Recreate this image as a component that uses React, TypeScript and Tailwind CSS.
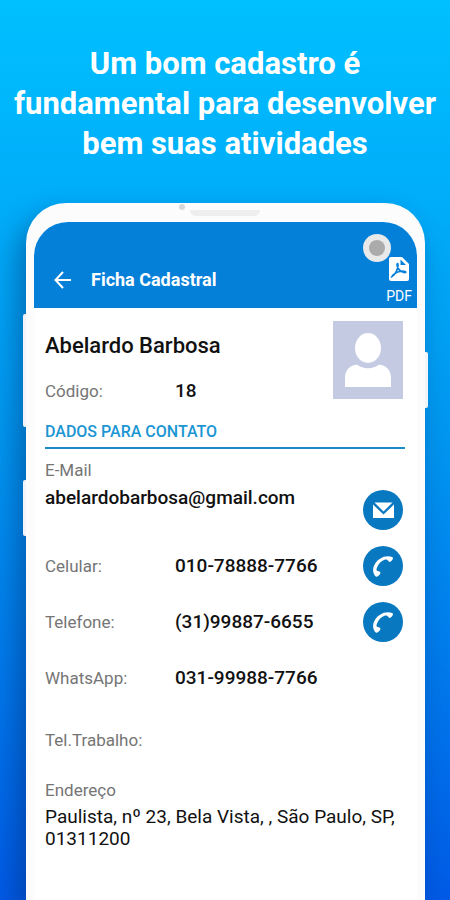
import React from "react";

const pageBackground = "bg-linear-to-b from-[#00c0ff] via-[#0095f0] via-50% to-[#005ae6]";

function PhoneGlyph() {
  return (
    <svg viewBox="0 0 40 40" className="size-10" aria-hidden="true">
      <path
        d="M12.800 30.500C9.300 27.500 9.400 22 12 17.800C14.800 13.200 20 10 25 10.200C27.500 10.300 29.800 10.900 30 11.800C30.200 13 28.500 15.800 26.800 15.900C25.200 15.900 25 13.700 23.500 13.600C20.500 13.500 17 16.300 15.300 19.100C13.700 21.800 13 24 13.900 24.800C14.800 25.500 17.200 25 17.400 26.600C17.600 28.200 14.500 31.600 12.800 30.500Z"
        fill="#fff"
      />
    </svg>
  );
}

function MailGlyph() {
  return (
    <svg viewBox="0 0 40 40" className="size-10" aria-hidden="true">
      <path d="M11.500 12.500H29.500L20.500 21.500Z" fill="#fff" />
      <path d="M10 14.500L20.500 24.500L31 14.500V28H10Z" fill="#fff" />
    </svg>
  );
}

function ActionLink({ href, label, children }: { href: string; label: string; children: React.ReactNode }) {
  return (
    <a
      href={href}
      aria-label={label}
      className="mr-0.5 flex size-10 shrink-0 items-center justify-center rounded-full bg-[#0878c0]"
    >
      {children}
    </a>
  );
}

function ContactRow({ label, value, children }: { label: string; value?: string; children?: React.ReactNode }) {
  return (
    <div className="flex h-10 items-center">
      <dt className="w-[130px] shrink-0 text-[17px] leading-5 text-[#757575]">{label}</dt>
      <dd className="flex flex-1 items-center justify-between text-[19px] leading-6 font-medium">
        <span>{value}</span>
        {children}
      </dd>
    </div>
  );
}

function AppHeader() {
  return (
    <header className="flex h-[86px] items-end justify-between rounded-t-[34px] bg-[#0580d9] pr-[5px] pl-[18px] text-white">
      <div className="flex items-center gap-[17px] pb-4">
        <button type="button" aria-label="Voltar" className="size-[22px]">
          <svg viewBox="0 0 22 22" className="size-[22px]" fill="none" stroke="#fff" strokeWidth="2" aria-hidden="true">
            <path d="M19 11H4M11 3L3.500 11L11 19" />
          </svg>
        </button>
        <h2 className="text-lg leading-6 font-bold">Ficha Cadastral</h2>
      </div>
      <button type="button" className="relative flex flex-col items-center pb-1 text-sm leading-4">
        <svg viewBox="0 0 20 24" className="mb-[7px] h-6 w-5" aria-hidden="true">
          <path d="M2 0H13L20 7V22Q20 24 18 24H2Q0 24 0 22V2Q0 0 2 0Z" fill="#fff" />
          <path d="M11.500 2.500V8H17Z" fill="#0580d9" />
          <path
            d="M3 19.500C6 18 9 12.500 9 8C9 5.500 7.500 6.500 8.200 9C9.200 13 13 16 16.500 15.500C18 14.500 13 13.500 9.500 14.800C7 15.600 3.500 18 3 19.500Z"
            fill="none"
            stroke="#0580d9"
            strokeWidth="1.700"
          />
        </svg>
        PDF
        <span className="absolute -top-[23px] -left-[23px] flex size-7 items-center justify-center rounded-full bg-[#e9e9e9]">
          <span className="size-4 rounded-full bg-[#ababab]" />
        </span>
      </button>
    </header>
  );
}

function Avatar() {
  return (
    <svg viewBox="0 0 70 78" className="mr-0.5 h-[78px] w-[70px]" role="img" aria-label="Foto">
      <rect width="70" height="78" fill="#c3cae2" />
      <ellipse cx="35" cy="27" rx="13" ry="15" fill="#fff" />
      <path d="M12 66V57C12 49 17 44 24 43.500C30 48.500 40 48.500 46 43.500C53 44 58 49 58 57V66Z" fill="#fff" />
    </svg>
  );
}

export default function App() {
  return (
    <main className={`flex min-h-screen flex-col overflow-hidden font-[Roboto,sans-serif] ${pageBackground}`}>
      <h1 className="px-3 pt-11 text-center text-[31px] leading-10 font-bold text-white">
        Um bom cadastro é<br />
        fundamental para desenvolver
        <br />
        bem suas atividades
      </h1>

      <div className="relative mt-[39px] mr-[25px] ml-[26px] flex flex-1 flex-col rounded-t-[40px] bg-[#fcfcfc] px-2 pt-[19px] shadow-[-8px_14px_28px_rgba(0,30,90,0.42)]">
        <span className="absolute top-[111px] -left-[3px] h-[113px] w-[3px] rounded-l-xs bg-[#f3f4f8]" />
        <span className="absolute top-[277px] -left-[3px] h-14 w-[3px] rounded-l-xs bg-[#f3f4f8]" />
        <span className="absolute top-[149px] -right-[3px] h-14 w-[3px] rounded-r-xs bg-[#f3f4f8]" />
        <span className="absolute top-px left-[153px] size-1.5 rounded-full bg-[#d8d8da]" />
        <span className="absolute top-[7px] left-[164px] h-1.5 w-[70px] rounded-b-md bg-[#eeeeef]" />

        <AppHeader />

        <section className="flex-1 bg-white pt-[13px] pr-3 pb-[50px] pl-[11px] text-[#111]">
          <div className="flex h-20 justify-between">
            <div className="flex flex-col justify-between pt-[13px]">
              <h3 className="text-[22px] leading-6 font-medium">Abelardo Barbosa</h3>
              <dl className="flex items-center">
                <dt className="w-[130px] text-[17px] leading-5 text-[#757575]">Código:</dt>
                <dd className="text-[19px] leading-5 font-medium">18</dd>
              </dl>
            </div>
            <Avatar />
          </div>

          <h4 className="mt-[21px] border-b-2 border-[#1b8ac6] pb-[5px] text-base leading-5 font-medium text-[#1b96d3]">
            DADOS PARA CONTATO
          </h4>

          <dl>
            <div className="mt-[11px] flex h-[70px] items-end justify-between">
              <div className="flex h-full flex-col gap-1.5">
                <dt className="text-[17px] leading-5 text-[#757575]">E-Mail</dt>
                <dd className="text-[19px] leading-6 font-medium">abelardobarbosa@gmail.com</dd>
              </div>
              <ActionLink href="mailto:abelardobarbosa@gmail.com" label="Enviar e-mail">
                <MailGlyph />
              </ActionLink>
            </div>
            <div className="mt-4 flex flex-col gap-4">
              <ContactRow label="Celular:" value="010-78888-7766">
                <ActionLink href="tel:010788887766" label="Ligar para o celular">
                  <PhoneGlyph />
                </ActionLink>
              </ContactRow>
              <ContactRow label="Telefone:" value="(31)99887-6655">
                <ActionLink href="tel:31998876655" label="Ligar para o telefone">
                  <PhoneGlyph />
                </ActionLink>
              </ContactRow>
              <ContactRow label="WhatsApp:" value="031-99988-7766" />
            </div>
            <div className="mt-[22px]">
              <ContactRow label="Tel.Trabalho:" />
            </div>
            <div className="mt-5">
              <dt className="text-[17px] leading-5 text-[#757575]">Endereço</dt>
              <dd className="mt-1.5 text-[19px] leading-[22px]">
                Paulista, nº 23, Bela Vista, , São Paulo, SP, 01311200
              </dd>
            </div>
          </dl>
        </section>
      </div>
    </main>
  );
}
